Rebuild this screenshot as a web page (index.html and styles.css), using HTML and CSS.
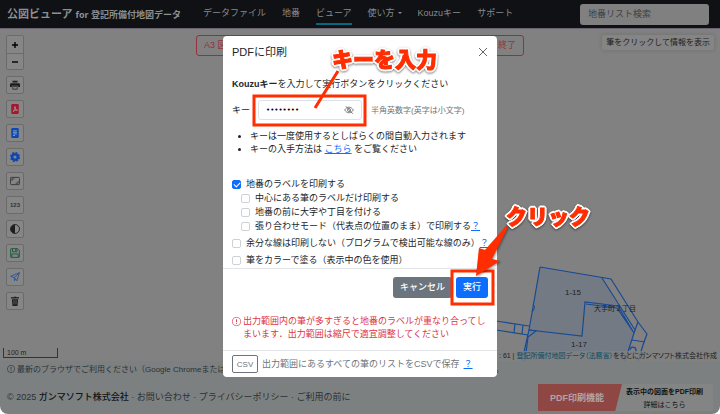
FILE: index.html
```html
<!DOCTYPE html>
<html lang="ja">

<head>
    <meta charset="UTF-8">
    <meta name="viewport" content="width=device-width, initial-scale=1.0">
    <title>公図ビューア</title>
    <link rel="stylesheet" href="styles.css">
</head>

<body>
    <div class="page">
        <header class="navbar">
            <a href="#" class="brand">公図ビューア <small>for 登記所備付地図データ</small></a>
            <nav class="menu">
                <a href="#">データファイル</a>
                <a href="#">地番</a>
                <a href="#" class="active">ビューア</a>
                <a href="#" class="dropdown">使い方</a>
                <a href="#">Kouzuキー</a>
                <a href="#">サポート</a>
            </nav>
            <input type="search" class="search" placeholder="地番リスト検索" aria-label="地番リスト検索">
        </header>

        <main class="map">
            <!-- 地図の筆 -->
            <svg class="parcels" width="224" height="101" viewBox="496 260 224 101">
                <path class="area" d="M540 267L602 278L634 333L624 361H522L529 330Z" />
                <path d="M540 267L529 330L522 361M540 267L611 279L638 322L647 334L644 342L638 361" />
                <path d="M529 330L582 336L585 302L618 306M586 304L617 308L634 333M602 278L635 330M618 306L634 333L625 361M638 322L634 333M632 340L645 342" />
                <path d="M496 321L529 326M496 330L528 335M515 324L514 333M523 325L522 334M529 330L536 331L528 337L525 361" />
                <path d="M533 304q3 4 -1 8" class="thin" />
                <path d="M630 350a3 3 0 1 1 4 3" />
                <text x="573" y="295" class="no">1-15</text>
                <text x="579" y="347" class="no">1-17</text>
                <text x="615" y="311" class="town">大手町２丁目</text>
            </svg>

            <div class="tools">
                <div class="zoom">
                    <button aria-label="拡大"><svg width="8" height="8" viewBox="0 0 8 8"><path d="M1 4h6M4 1v6" stroke="#000" stroke-width="1.4" /></svg></button>
                    <button aria-label="縮小"><svg width="8" height="8" viewBox="0 0 8 8"><path d="M1 4h6" stroke="#000" stroke-width="1.4" /></svg></button>
                </div>
                <button class="tool" aria-label="印刷">
                    <svg width="10" height="10" viewBox="0 0 16 16"><path d="M4 1h8v3H4zM2 5h12a2 2 0 0 1 2 2v4h-3V9H3v2H0V7a2 2 0 0 1 2-2zM4 10h8v5H4z" fill="#1c1e20" /><path d="M5 11h6v3H5z" fill="#858585" /></svg>
                </button>
                <button class="tool" aria-label="PDF">
                    <svg width="10" height="10" viewBox="0 0 16 16"><rect x="2" width="12" height="16" rx="2" fill="#a3182c" /><path d="M5 12c2-1 4-5 3-8c-1 4 2 6 4 6c-2-1-5 0-7 2z" fill="none" stroke="#aaa" stroke-width="1.2" /></svg>
                </button>
                <button class="tool" aria-label="文書">
                    <svg width="10" height="10" viewBox="0 0 16 16"><rect x="2" width="12" height="16" rx="2" fill="#0b48b4" /><path d="M5 4.500h6M5 7h6M5 9.500h6M5 12h3" stroke="#a5adba" stroke-width="1.3" /></svg>
                </button>
                <button class="tool" aria-label="設定">
                    <svg width="10" height="10" viewBox="0 0 16 16"><circle cx="8" cy="8" r="7" fill="none" stroke="#0b48b4" stroke-width="2" stroke-dasharray="3.200 2.300" /><circle cx="8" cy="8" r="4.500" fill="none" stroke="#0b48b4" stroke-width="4" /></svg>
                </button>
                <button class="tool" aria-label="範囲">
                    <svg width="10" height="10" viewBox="0 0 16 16"><rect x="0.700" y="2.200" width="14.600" height="11.600" rx="1.500" fill="none" stroke="#333" stroke-width="1.400" /><path d="M3 8V4.500h4M13 8v3.500H9" fill="none" stroke="#333" stroke-width="1.300" /></svg>
                </button>
                <button class="tool num">123</button>
                <button class="tool" aria-label="コントラスト">
                    <svg width="10" height="10" viewBox="0 0 16 16"><circle cx="8" cy="8" r="7.200" fill="none" stroke="#1c1e20" stroke-width="1.400" /><path d="M8 1a7 7 0 0 0 0 14z" fill="#1c1e20" /></svg>
                </button>
                <button class="tool" aria-label="保存">
                    <svg width="10" height="10" viewBox="0 0 16 16" fill="none" stroke="#1b5a3c" stroke-width="1.500"><path d="M1 2a1 1 0 0 1 1-1h10l3 3v10a1 1 0 0 1-1 1H2a1 1 0 0 1-1-1zM4 1v5h7V1M9 2v3M3 15V9.500h10V15" /></svg>
                </button>
                <button class="tool" aria-label="送信">
                    <svg width="10" height="10" viewBox="0 0 16 16" fill="none" stroke="#1d4fa5" stroke-width="1.300" stroke-linejoin="round"><path d="M15 1L11 14L7 9L1 7zM15 1L7 9v5l2-2.500" /></svg>
                </button>
                <button class="tool" aria-label="削除">
                    <svg width="10" height="10" viewBox="0 0 16 16"><path d="M1.500 2H6V1h4v1h4.500v2h-13zM3 5h10l-1 11H4z" fill="#1c1e20" /><path d="M6 6.500v7M8 6.500v7M10 6.500v7" stroke="#777" stroke-width="0.800" /></svg>
                </button>
            </div>

            <div class="banner"><span>A3 図面</span><a href="#">終了</a></div>
            <div class="hint">筆をクリックして情報を表示</div>
            <div class="scale">100 m</div>
            <div class="attribution">: 61 | <a href="#">登記所備付地図データ（法務省）</a>をもとにガンマソフト株式会社作成</div>
        </main>

        <p class="notice">
            <svg width="8" height="8" viewBox="0 0 16 16"><circle cx="8" cy="8" r="7.300" fill="none" stroke="#2c3034" stroke-width="1.200" /><path d="M8 4v5M8 10.500v1.800" stroke="#2c3034" stroke-width="1.600" /></svg>
            最新のブラウザでご利用ください（Google ChromeまたはMicrosoft Edge、Safariの最新バージョンを用いると快適に表示ができます）。
        </p>

        <footer class="footer">
            <p>© 2025 <a href="#" class="company">ガンマソフト株式会社</a> · <a href="#">お問い合わせ</a> · <a href="#">プライバシーポリシー</a> · <a href="#">ご利用の前に</a></p>
            <a href="#" class="promo">
                <span class="promo-name">PDF印刷機能</span>
                <span class="promo-text"><b>表示中の図面をPDF印刷</b>詳細はこちら</span>
            </a>
        </footer>
    </div>

    <div class="overlay">
        <form class="modal" role="dialog" aria-labelledby="modalTitle">
            <div class="modal-header">
                <h1 id="modalTitle">PDFに印刷</h1>
                <button type="button" class="close" aria-label="閉じる"><svg width="10" height="10" viewBox="0 0 10 10"><path d="M1 1l8 8M9 1l-8 8" stroke="#666" stroke-width="1" /></svg></button>
            </div>
            <div class="modal-body">
                <p><b>Kouzuキー</b>を入力して実行ボタンをクリックください</p>
                <div class="key-row">
                    <label for="key">キー</label>
                    <div class="key-box">
                        <input type="password" id="key" value="abcd1234">
                        <svg width="10" height="10" viewBox="0 0 16 16" fill="none" stroke="#666" stroke-width="1.300"><path d="M1 8c4-6 10-6 14 0c-4 6-10 6-14 0zM3 2l11 12" /><circle cx="8" cy="8" r="2.500" /></svg>
                    </div>
                    <small>半角英数字(英字は小文字)</small>
                </div>
                <ul>
                    <li>キーは一度使用するとしばらくの間自動入力されます</li>
                    <li>キーの入手方法は <a href="#">こちら</a> をご覧ください</li>
                </ul>
                <div class="options">
                    <label><input type="checkbox" checked>地番のラベルを印刷する</label>
                    <label class="sub"><input type="checkbox">中心にある筆のラベルだけ印刷する</label>
                    <label class="sub"><input type="checkbox">地番の前に大字や丁目を付ける</label>
                    <div class="option sub"><label><input type="checkbox">張り合わせモード（代表点の位置のまま）で印刷する</label><a href="#">？</a></div>
                    <div class="option wide"><label><input type="checkbox">余分な線は印刷しない（プログラムで検出可能な線のみ）</label><a href="#">？</a></div>
                    <label class="wide"><input type="checkbox">筆をカラーで塗る（表示中の色を使用）</label>
                </div>
            </div>
            <div class="modal-actions">
                <button type="button" class="btn">キャンセル</button>
                <button type="submit" class="btn primary">実行</button>
            </div>
            <div class="warning">
                <svg width="9" height="9" viewBox="0 0 16 16"><circle cx="8" cy="8" r="7.300" fill="none" stroke="#dc3545" stroke-width="1.200" /><path d="M8 4v5M8 10.500v1.800" stroke="#dc3545" stroke-width="1.600" /></svg>
                <p>出力範囲内の筆が多すぎると地番のラベルが重なり合ってしまいます．出力範囲は縮尺で適宜調整してください</p>
            </div>
            <div class="csv-row">
                <button type="button" class="csv">CSV</button>
                <span>出力範囲にあるすべての筆のリストをCSVで保存</span>
                <a href="#">？</a>
            </div>

            <!-- 操作説明の注釈 -->
            <svg class="guide" width="274" height="341" viewBox="223 36 274 341">
                <rect x="254" y="96" width="111" height="29" />
                <rect x="452" y="271" width="41" height="33" />
                <path d="M338 71L315 108" />
                <path class="arrow" d="M506 226L485 250L479 248L476 276L500 261L492 259L508 227Z" />
                <text x="332" y="67">キーを入力</text>
                <text x="506" y="224">クリック</text>
            </svg>
        </form>
    </div>
</body>

</html>
```
FILE: styles.css
```css
* {
    box-sizing: border-box;
    margin: 0;
    padding: 0;
}

body {
    background: #fff;
    color: #212529;
    font: 9px/13px "Liberation Sans", "Noto Sans CJK JP", sans-serif;
}

a {
    color: #0d6efd;
}

button,
input {
    font: inherit;
}

svg {
    display: block;
    flex: none;
}

.page {
    display: flex;
    flex-direction: column;
    min-height: 100vh;
    background: #7d8080;
    border-radius: 0 0 8px 8px;
    overflow: hidden;
}

.page a {
    text-decoration: none;
}

/* ナビゲーション */
.navbar {
    display: flex;
    align-items: center;
    height: 28px;
    padding: 0 11px 0 7px;
    background: #0f1114;
    white-space: nowrap;
}

.brand {
    color: #8d8f91;
    font-size: 11px;
    font-weight: bold;
    font-family: "Noto Sans", "Noto Sans CJK JP", sans-serif;
}

.brand small {
    font-size: 9px;
}

.menu {
    display: flex;
    gap: 16px;
    flex: 1;
    margin-left: 22px;
}

.menu a {
    padding: 3px 0;
    color: #898b8d;
    border-bottom: 2px solid transparent;
}

.menu .active {
    border-color: #08657a;
}

.dropdown::after {
    content: "";
    display: inline-block;
    margin: 0 0 2px 3px;
    border: 2px solid transparent;
    border-top-color: #898b8d;
    border-bottom: 0;
}

.search {
    width: 129px;
    height: 21px;
    padding: 0 8px;
    border: 0;
    border-radius: 3px;
    background: #808080;
}

.search::placeholder {
    color: #3c4145;
}

/* 地図 */
.map {
    position: relative;
    display: flex;
    justify-content: space-between;
    align-items: flex-start;
    flex: 1;
    padding: 6px;
    background: #818181;
    border-top: 1px solid #6a6470;
}

.parcels {
    position: absolute;
    right: 0;
    bottom: 0;
    fill: none;
    stroke: #174a94;
    stroke-width: 1.2;
}

.parcels .area {
    fill: #747a84;
    stroke: none;
}

.parcels .thin {
    stroke-width: 1;
}

.parcels text {
    fill: #222;
    stroke: none;
    text-anchor: middle;
}

.parcels .no {
    font-size: 8px;
}

.parcels .town {
    font-size: 7px;
}

.tools {
    display: grid;
    gap: 6px;
    width: 18px;
}

.tools button {
    display: grid;
    place-items: center;
    width: 100%;
    background: #868686;
}

.zoom {
    display: grid;
    border: 1px solid #6b6b6b;
    border-radius: 2px;
}

.zoom button {
    height: 17px;
    border: 0;
}

.zoom button + button {
    height: 16px;
    border-top: 1px solid #6b6b6b;
}

.tool {
    height: 18px;
    border: 1px solid #6b6b6b;
    border-radius: 2px;
}

.tools .num {
    color: #333;
    font-size: 6px;
    font-weight: bold;
}

.banner {
    display: flex;
    justify-content: space-between;
    width: 328px;
    height: 21px;
    padding: 3px 7px;
    margin-left: 94px;
    border: 1px solid #96303c;
    border-radius: 3px;
    color: #96303c;
}

.banner a {
    color: inherit;
}

.hint {
    padding: 1px 4px;
    border-radius: 2px;
    background: #858585;
    box-shadow: 0 0 4px rgba(0, 0, 0, .15);
    color: #1c1e20;
    font-size: 8px;
}

.scale {
    position: absolute;
    left: 3px;
    bottom: 3px;
    width: 55px;
    height: 10px;
    padding-left: 3px;
    border: 1px solid #333;
    border-top: 0;
    color: #222;
    font-size: 7px;
    line-height: 9px;
}

.attribution {
    position: absolute;
    right: 0;
    bottom: 0;
    padding: 0 3px;
    background: rgba(129, 129, 129, .8);
    color: #1f1f1f;
    font-size: 7px;
    line-height: 10px;
    font-feature-settings: "palt";
    white-space: nowrap;
}

.attribution a {
    color: #0a4a63;
}

/* フッター */
.notice {
    display: flex;
    align-items: center;
    gap: 2px;
    height: 16px;
    padding: 0 7px;
    color: #2c3034;
    font-size: 8px;
    white-space: nowrap;
}

.footer {
    display: flex;
    align-items: center;
    justify-content: space-between;
    height: 37px;
    padding: 4px 7px 0;
    color: #2c3034;
    white-space: nowrap;
}

.footer a {
    color: inherit;
}

.footer .company {
    color: #111315;
    font-weight: 500;
}

.promo {
    display: flex;
    height: 27px;
    width: 175px;
    background: #838585;
}

.promo-name {
    width: 84px;
    padding: 1px 0 0 12px;
    background: #8f4744;
    clip-path: polygon(0 0, 100% 0, 92% 100%, 0 100%);
    color: #b3a4a4;
    font-weight: bold;
    line-height: 27px;
}

.promo-text {
    display: grid;
    flex: 1;
    padding: 2px 9px 0 3px;
    color: #111;
    font-size: 7px;
    line-height: 12px;
    text-align: center;
}

/* 印刷ダイアログ */
.overlay {
    position: absolute;
    top: 0;
    left: 0;
    width: 100%;
    padding-top: 36px;
}

.modal {
    position: relative;
    width: 274px;
    margin: 0 auto;
    background: #fff;
    border-radius: 4px;
}

.modal-header {
    display: flex;
    align-items: center;
    justify-content: space-between;
    height: 32px;
    padding: 0 9px;
}

.modal-header h1 {
    font-size: 11px;
    font-weight: normal;
}

.close {
    border: 0;
    background: none;
}

.modal-body {
    padding: 10px 9px 1px;
    border-bottom: 1px solid #e3e5e8;
    white-space: nowrap;
}

.key-row {
    display: flex;
    align-items: center;
    margin: 9px 0 10px;
}

.key-box {
    display: flex;
    align-items: center;
    width: 104px;
    height: 20px;
    margin: 0 9px 0 8px;
    padding: 0 7px;
    border: 1px solid #dee2e6;
    border-radius: 3px;
}

.key-box input {
    flex: 1;
    min-width: 0;
    border: 0;
    outline: none;
    font: 7px "DejaVu Sans", sans-serif;
}

.key-row small {
    color: #6c757d;
    font-size: 8px;
}

.modal-body ul {
    padding-left: 18px;
}

.options {
    display: grid;
    margin-top: 21px;
    line-height: 14px;
}

.options label,
.option {
    display: flex;
    align-items: center;
}

.options .sub {
    padding-left: 9px;
}

.wide {
    margin-top: 3px;
}

.options input {
    appearance: none;
    width: 9px;
    height: 9px;
    margin-right: 5px;
    border: 1px solid #ced2d6;
    border-radius: 2px;
}

.options input:checked {
    border-color: #0d6efd;
    background: #0d6efd;
}

.options input:checked::after {
    content: "";
    display: block;
    width: 5px;
    height: 3px;
    margin: 1px;
    border: solid #fff;
    border-width: 0 0 1px 1px;
    transform: rotate(-45deg);
}

.modal-actions {
    display: flex;
    justify-content: flex-end;
    gap: 4px;
    padding: 8px 9px 17px;
}

.btn {
    height: 21px;
    padding: 0 7px;
    border: 0;
    border-radius: 3px;
    background: #6c757d;
    color: #fff;
    font-weight: 500;
}

.btn.primary {
    background: #0d6efd;
}

.warning {
    display: flex;
    gap: 2px;
    padding: 0 9px 9px;
    border-bottom: 1px solid #e3e5e8;
    color: #dc3545;
}

.warning svg {
    margin-top: 2px;
}

.csv-row {
    display: flex;
    align-items: center;
    gap: 4px;
    padding: 4px 9px;
    color: #6c757d;
    white-space: nowrap;
}

.csv {
    width: 26px;
    height: 18px;
    border: 1px solid #6c757d;
    border-radius: 2px;
    background: #fff;
    color: #6c757d;
    font-size: 8px;
}

/* 注釈 */
.guide {
    position: absolute;
    top: 0;
    left: 0;
    overflow: visible;
    pointer-events: none;
    fill: none;
    stroke: #ff2d00;
    stroke-width: 3;
}

.guide .arrow {
    fill: #ff2d00;
    stroke: none;
    filter: drop-shadow(1px 1px 1px rgba(0, 0, 0, .4));
}

.guide text {
    fill: #ff2d00;
    stroke-width: 1;
    font-size: 21px;
    font-weight: 900;
    filter: drop-shadow(1px 1px 0 #fff) drop-shadow(-1px -1px 0 #fff) drop-shadow(1px -1px 0 #fff) drop-shadow(-1px 1px 0 #fff) drop-shadow(0 1px 1px rgba(0, 0, 0, .5));
}
```
